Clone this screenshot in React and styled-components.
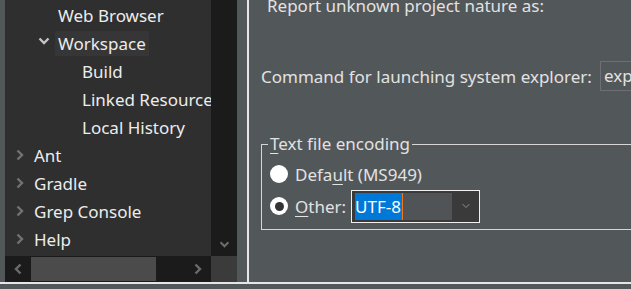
import React from "react";
import styled, { createGlobalStyle } from "styled-components";

const Global = createGlobalStyle`
  html, body { margin: 0; padding: 0; }
  body {
    background: #52575a;
    font-family: "Noto Sans", "Open Sans", sans-serif;
    font-size: 17px;
    color: #e4e4e4;
    overflow: hidden;
  }
`;

const Screen = styled.div`
  width: 631px;
  height: 289px;
  display: grid;
  grid-template-rows: 282px 2px 5px;
  overflow: hidden;
`;

const Main = styled.div`
  display: flex;
  min-height: 0;
`;

const LeftPane = styled.div`
  width: 247px;
  flex: none;
  box-sizing: border-box;
  padding: 0 10px 0 5px;
`;

const TreeBox = styled.div`
  display: grid;
  grid-template-columns: 206px 26px;
  grid-template-rows: 256px 26px;
  height: 282px;
`;

const TreeView = styled.div`
  background: #2f2f2f;
  overflow: hidden;
  padding-top: 1px;
  box-sizing: border-box;
`;

const Row = styled.div`
  height: 28px;
  display: flex;
  align-items: center;
  padding-left: ${(p) => 6 + p.$level * 24}px;
  white-space: nowrap;
`;

const Toggle = styled.span`
  width: 17px;
  flex: none;
  display: flex;
  justify-content: center;
  align-items: center;
  margin-top: ${(p) => (p.$open ? "-4px" : "0")};
  color: ${(p) => (p.$open ? "#c4c4c4" : "#727272")};
`;

const Label = styled.span`
  margin-left: 3px;
  padding: 0 3px;
  height: 25px;
  line-height: 25px;
  color: #ececec;
  background: ${(p) => (p.$active ? "#363636" : "transparent")};
`;

const VScroll = styled.div`
  background: #1b1b1b;
  display: flex;
  align-items: flex-end;
  justify-content: center;
  padding-bottom: 8px;
  box-sizing: border-box;
  color: #6c6c6c;
`;

const HScroll = styled.div`
  background: #1b1b1b;
  display: flex;
  align-items: center;
  color: #6c6c6c;
`;

const ArrowCell = styled.span`
  width: 26px;
  flex: none;
  display: flex;
  justify-content: center;
  align-items: center;
`;

const Thumb = styled.div`
  width: 125px;
  height: 24px;
  background: #4b4b4b;
`;

const Spacer = styled.div`
  flex: 1;
`;

const Corner = styled.div`
  background: #3b3b3b;
`;

const VSash = styled.div`
  width: 2px;
  flex: none;
  background: #e6e6e6;
`;

const HLine = styled.div`
  background: #e6e6e6;
`;

const RightPane = styled.div`
  flex: 1;
  min-width: 0;
  overflow: hidden;
  padding-left: 12px;
  white-space: nowrap;
`;

const Caption = styled.div`
  height: 28px;
  line-height: 28px;
  margin-top: -8px;
  padding-left: 6px;
  color: #e2e2e2;
`;

const CommandRow = styled.div`
  margin-top: 41px;
  height: 30px;
  display: flex;
  align-items: center;
  gap: 8px;
  color: #e2e2e2;
`;

const TextField = styled.div`
  width: 120px;
  height: 30px;
  box-sizing: border-box;
  border: 1px solid #6c7073;
  line-height: 28px;
  padding-left: 3px;
  flex: none;
`;

const Group = styled.fieldset`
  margin: 42px 0 0 0;
  width: 600px;
  border: 1px solid #d6d6d6;
  padding: 5px 0 5px 6px;
  box-sizing: border-box;
`;

const Legend = styled.legend`
  padding: 0 2px;
  line-height: 22px;
  color: #e2e2e2;
`;

const Mn = styled.span`
  text-decoration: underline;
  text-underline-offset: 3px;
`;

const RadioRow = styled.div`
  height: ${(p) => p.$h}px;
  display: flex;
  align-items: center;
  color: #e2e2e2;
`;

const Radio = styled.span`
  width: 18px;
  height: 18px;
  border-radius: 50%;
  background: #ffffff;
  flex: none;
  margin: 0 7px 0 2px;
  display: flex;
  align-items: center;
  justify-content: center;
  &::after {
    content: "";
    width: 9px;
    height: 9px;
    border-radius: 50%;
    background: ${(p) => (p.$checked ? "#333333" : "transparent")};
  }
`;

const Combo = styled.div`
  margin-left: 5px;
  width: 129px;
  height: 33px;
  box-sizing: border-box;
  border: 1px solid #f0f0f0;
  background: #3a3a3a;
  display: flex;
  padding: 2px 0 2px 3px;
`;

const ComboField = styled.div`
  width: 97px;
  background: #505457;
  display: flex;
`;

const Selection = styled.span`
  background: #0078d7;
  color: #ffffff;
  line-height: 27px;
  padding-right: 1px;
  border-right: 1px solid #f07a1a;
`;

const ComboButton = styled.div`
  flex: 1;
  display: flex;
  align-items: center;
  justify-content: center;
  color: #9a9a9a;
`;

const ChevronRight = () => (
  <svg width="8" height="12" viewBox="0 0 8 12">
    <path d="M1.5 1.5 L6 6 L1.5 10.5" fill="none" stroke="currentColor" strokeWidth="2.4" />
  </svg>
);

const ChevronLeft = () => (
  <svg width="8" height="12" viewBox="0 0 8 12">
    <path d="M6.5 1.5 L2 6 L6.5 10.5" fill="none" stroke="currentColor" strokeWidth="2.4" />
  </svg>
);

const ChevronDown = ({ w = 12, h = 8, sw = 2.4 }) => (
  <svg width={w} height={h} viewBox="0 0 12 8">
    <path d="M1.5 1.5 L6 6 L10.5 1.5" fill="none" stroke="currentColor" strokeWidth={sw} />
  </svg>
);

const tree = [
  { label: "Web Browser", level: 1 },
  { label: "Workspace", level: 1, open: true, active: true },
  { label: "Build", level: 2 },
  { label: "Linked Resources", level: 2 },
  { label: "Local History", level: 2 },
  { label: "Ant", level: 0, closed: true },
  { label: "Gradle", level: 0, closed: true },
  { label: "Grep Console", level: 0, closed: true },
  { label: "Help", level: 0, closed: true },
];

export default function App() {
  return (
    <>
      <Global />
      <Screen>
        <Main>
          <LeftPane>
            <TreeBox>
              <TreeView>
                {tree.map((n) => (
                  <Row key={n.label} $level={n.level}>
                    <Toggle $open={n.open}>
                      {n.open ? <ChevronDown /> : n.closed ? <ChevronRight /> : null}
                    </Toggle>
                    <Label $active={n.active}>{n.label}</Label>
                  </Row>
                ))}
              </TreeView>
              <VScroll>
                <ChevronDown w={11} h={7} />
              </VScroll>
              <HScroll>
                <ArrowCell>
                  <ChevronLeft />
                </ArrowCell>
                <Thumb />
                <Spacer />
                <ArrowCell>
                  <ChevronRight />
                </ArrowCell>
              </HScroll>
              <Corner />
            </TreeBox>
          </LeftPane>
          <VSash />
          <RightPane>
            <Caption>Report unknown project nature as:</Caption>
            <CommandRow>
              Command for launching system explorer:
              <TextField>explorer /E,/select=</TextField>
            </CommandRow>
            <Group>
              <Legend>
                <Mn>T</Mn>ext file encoding
              </Legend>
              <RadioRow $h={28}>
                <Radio />
                Defa<Mn>u</Mn>lt (MS949)
              </RadioRow>
              <RadioRow $h={36}>
                <Radio $checked />
                <Mn>O</Mn>ther:
                <Combo>
                  <ComboField>
                    <Selection>UTF-8</Selection>
                  </ComboField>
                  <ComboButton>
                    <ChevronDown w={10} h={6} sw={1.2} />
                  </ComboButton>
                </Combo>
              </RadioRow>
            </Group>
          </RightPane>
        </Main>
        <HLine />
      </Screen>
    </>
  );
}
